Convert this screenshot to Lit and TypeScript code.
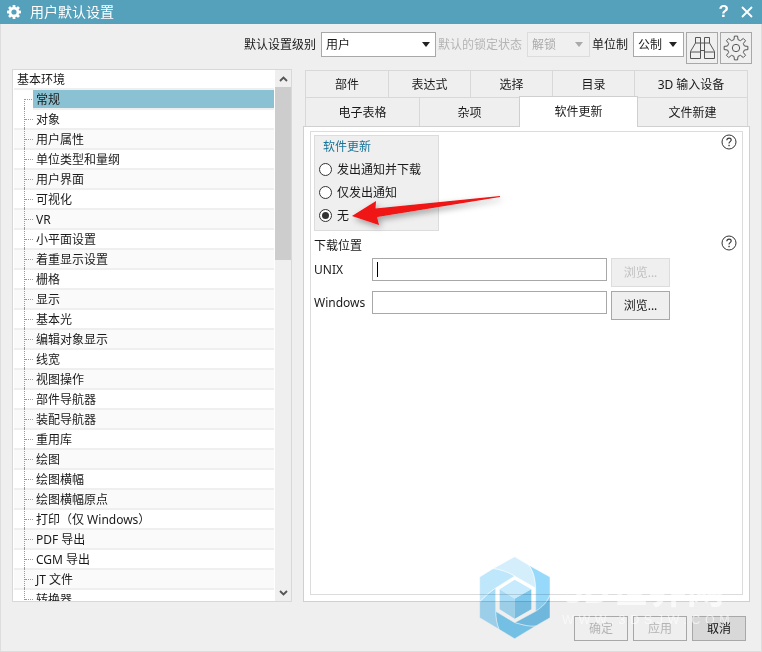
import { LitElement, html, css } from "lit";
import { customElement } from "lit/decorators.js";

const ITEMS = ["常规","对象","用户属性","单位类型和量纲","用户界面","可视化","VR","小平面设置","着重显示设置","栅格","显示","基本光","编辑对象显示","线宽","视图操作","部件导航器","装配导航器","重用库","绘图","绘图横幅","绘图横幅原点","打印（仅 Windows）","PDF 导出","CGM 导出","JT 文件","转换器"];

const help = (cls: string) => html`<svg class="help ${cls}" width="16" height="16" viewBox="0 0 16 16"><circle cx="8" cy="8" r="7" fill="none" stroke="#333" stroke-width="1"/><path d="M5.800 6.200c.1-1.400 1-2.100 2.200-2.100s2.200.8 2.200 1.900c0 1.700-2.200 1.700-2.200 3.500" fill="none" stroke="#333" stroke-width="1.100"/><rect x="7.400" y="10.800" width="1.300" height="1.400" fill="#333"/></svg>`;

const caret = (c: string) => html`<svg width="8" height="5" viewBox="0 0 8 5"><path d="M0 0h8L4 5z" fill=${c}/></svg>`;

function gearPath(cx: number, cy: number, ro: number, ri: number, teeth: number) {
  const pts: string[] = [];
  const step = (Math.PI * 2) / teeth;
  const pt = (r: number, a: number) => `${(cx + r * Math.cos(a)).toFixed(2)} ${(cy + r * Math.sin(a)).toFixed(2)}`;
  for (let i = 0; i < teeth; i++) {
    const a = i * step - Math.PI / 2;
    pts.push(pt(ri, a - step * 0.3), pt(ro, a - step * 0.17), pt(ro, a + step * 0.17), pt(ri, a + step * 0.3));
  }
  return "M" + pts.join("L") + "Z";
}

@customElement("app-root")
export class AppRoot extends LitElement {
  static styles = css`
    :host { display: block; width: 762px; height: 652px; overflow: hidden; position: relative; background: #efefef;
      font: 12px/16px "Noto Sans", "Noto Sans CJK SC", sans-serif; color: #1a1a1a; box-sizing: border-box; }
    * { box-sizing: border-box; }
    .title { height: 24px; background: #55a0bb; color: #fff; display: flex; align-items: center; padding: 0 9px 0 7px; }
    .title .name { margin-left: 9px; font-size: 14px; flex: 1; }
    .title .q { font: bold 17px "Liberation Sans", sans-serif; margin-right: 12px; }
    .main { height: 628px; border: 1px solid #ddd; border-top: 0; display: flex; flex-direction: column; padding: 8px 11px 0 11px; }
    .toolbar { height: 25px; display: flex; align-items: center; justify-content: flex-end; margin-right: -2px; }
    .lbl { white-space: nowrap; }
    .lbl.dis { color: #b4b4b4; }
    .sel { height: 25px; background: #fff; border: 1px solid #a8a8a8; display: flex; align-items: center; justify-content: space-between; padding: 0 6px 0 4px; }
    .sel.dis { border-color: #dcdcdc; background: #f0f0f0; color: #aaa; }
    .s1 { width: 115px; margin: 0 2px 0 5px; padding-right: 5px; }
    .s2 { width: 63px; margin: 0 2px 0 5px; }
    .s3 { width: 51px; margin: 0 2px 0 5px; }
    .toolbtn { width: 32px; height: 32px; border: 1px solid #a8a8a8; display: flex; align-items: center; justify-content: center; margin-top: 7px; }
    .toolbtn + .toolbtn { margin-left: 2px; }
    .content { display: flex; margin-top: 12px; height: 533px; }
    .tree { width: 280px; height: 533px; border: 1px solid #d8d8d8; background: #fff; display: flex; overflow: hidden; flex: none; }
    .list { width: 261px; flex: none; overflow: hidden; padding-left: 1px; }
    .row { height: 20px; display: flex; align-items: center; border-bottom: 2px solid #efefef; position: relative; padding: 1px 0 0 22px; line-height: 18px; white-space: nowrap; }
    .row:nth-child(even) { background: #fafafa; }
    .row.root { padding-left: 3px; background: #fff; }
    .row.item::before { content: ""; position: absolute; left: 10px; top: -2px; bottom: -2px; border-left: 1px dotted #999; }
    .row.item::after { content: ""; position: absolute; left: 11px; top: 9px; width: 8px; border-top: 1px dotted #999; }
    .row.sel-row { background: #8ac2d3; margin-left: 19px; padding-left: 3px; }
    .row.sel-row::before { left: -9px; top: 9px; }
    .row.sel-row::after { left: -8px; width: 7px; }
    .sb { width: 16px; background: #efefef; display: flex; flex-direction: column; align-items: center; flex: none; margin-left: 1px; }
    .sb .arrow { height: 17px; display: flex; align-items: center; justify-content: center; }
    .sb .thumb { height: 173px; width: 16px; background: #cdcdcd; margin-bottom: auto; }
    .right { margin-left: 11px; width: 447px; flex: none; height: 533px; display: flex; flex-direction: column; position: relative; }
    .tabs { display: grid; padding: 0 3px 0 2px; height: 28px; }
    .t1 { margin-top: 1px; grid-template-columns: 83px 82px 82px 82px 113px; }
    .t2 { grid-template-columns: 114px 100px 118px 110px; }
    .tab { border: 1px solid #d8d8d8; display: flex; align-items: center; justify-content: center; margin-right: -1px; background: #efefef; margin-top: -1px; padding-top: 2px; }
    .t1 .tab { margin-top: 0; }
    .tab.active { background: #fff; height: 31px; margin-top: -2px; z-index: 2; border-bottom: 0; border-color: #cfcfcf; align-self: start; padding-top: 0; }
    .panel { flex: 1; background: #fff; border: 1px solid #d0d0d0; padding: 4px 6px 6px; }
    .inner { height: 100%; border: 1px solid #dcdcdc; padding: 3px; position: relative; }
    .group { width: 125px; height: 96px; background: #efefef; border: 1px solid #dcdcdc; padding: 2px 0 0 8px; }
    .gt { color: #17749a; height: 20px; line-height: 17px; }
    .radio { display: flex; align-items: center; height: 23px; margin-left: -4px; gap: 5px; }
    .radio i { width: 13px; height: 13px; border: 1px solid #333; border-radius: 50%; background: #fff; display: flex; align-items: center; justify-content: center; flex: none; }
    .radio i.on::after { content: ""; width: 7px; height: 7px; border-radius: 50%; background: #333; }
    .help { position: absolute; }
    .help.h1 { top: 2px; right: 5px; }
    .help.h2 { top: 4px; right: 2px; }
    .hwrap { position: relative; height: 0; }
    .dl { margin-top: 6px; height: 18px; line-height: 18px; }
    .frow { display: flex; align-items: flex-start; margin-top: 4px; }
    .frow.first { margin-top: 3px; }
    .frow .k { width: 58px; padding-top: 4px; }
    .input { width: 235px; height: 23px; border: 1px solid #a8a8a8; background: #fff; }
    .caretbar { width: 1px; height: 15px; background: #000; margin: 3px 0 0 4px; }
    .browse { width: 59px; height: 29px; margin-left: 4px; border: 1px solid #a8a8a8; display: flex; align-items: center; justify-content: center; background: #efefef; }
    .browse.dis { border-color: #dcdcdc; color: #c0c0c0; }
    .footer { position: absolute; right: 16px; bottom: 11px; display: flex; gap: 5px; z-index: 1; }
    .btn { width: 54px; height: 25px; border: 1px solid #a8a8a8; display: flex; align-items: center; justify-content: center; color: #b4b4b4; }
    .btn.def { background: #d8d8d8; color: #111; }
    .over { position: absolute; left: 0; top: 0; pointer-events: none; z-index: 5; }
    .logo { position: absolute; left: 474px; top: 552px; pointer-events: none; z-index: 5; mix-blend-mode: multiply; }
    .wm1 { position: absolute; left: 562px; top: 570px; z-index: 6; color: rgba(255,255,255,.65); font: bold 38px/40px "Liberation Sans", "Noto Sans CJK SC", sans-serif; white-space: nowrap; }
    .wm2 { position: absolute; left: 562px; top: 613px; z-index: 6; color: rgba(255,255,255,.6); font: 12.5px/14px "Liberation Sans", sans-serif; letter-spacing: 4.6px; white-space: nowrap; }
  `;

  render() {
    return html`
      <div class="title">
        <svg width="14" height="14" viewBox="0 0 14 14"><g fill="#fff"><circle cx="7" cy="7" r="5.200"/><rect x="5.600" y="0" width="2.800" height="14" rx=".6"/><rect x="5.600" y="0" width="2.800" height="14" rx=".6" transform="rotate(45 7 7)"/><rect x="5.600" y="0" width="2.800" height="14" rx=".6" transform="rotate(90 7 7)"/><rect x="5.600" y="0" width="2.800" height="14" rx=".6" transform="rotate(135 7 7)"/></g><circle cx="7" cy="7" r="2.600" fill="#55a0bb"/></svg>
        <span class="name">用户默认设置</span>
        <span class="q">?</span>
        <svg width="12" height="12" viewBox="0 0 12 12"><path d="M1 1l10 10M11 1L1 11" stroke="#fff" stroke-width="1.800"/></svg>
      </div>
      <div class="main">
        <div class="toolbar">
          <span class="lbl">默认设置级别</span>
          <div class="sel s1"><span>用户</span>${caret("#222")}</div>
          <span class="lbl dis">默认的锁定状态</span>
          <div class="sel dis s2"><span>解锁</span>${caret("#aaa")}</div>
          <span class="lbl">单位制</span>
          <div class="sel s3"><span>公制</span>${caret("#222")}</div>
          <div class="toolbtn">
            <svg width="30" height="30" viewBox="0 0 30 30" fill="none" stroke="#555" stroke-width="1"><path d="M8.500 4.500H13.500V25.500H3.500V18.500L8.500 10ZM8.500 10H13.500M3.500 19H13.500M17.500 4.500H22.500V10L27.500 18.500V25.500H17.500ZM17.500 10H22.500M17.500 19H27.500M13.500 10H17.500M13.500 17.500H17.500"/></svg>
          </div>
          <div class="toolbtn">
            <svg width="30" height="30" viewBox="0 0 30 30" fill="none" stroke="#555" stroke-width="1" stroke-linejoin="round"><path d=${gearPath(15, 15, 12, 8.6, 8)}/><circle cx="15" cy="15" r="3.700"/></svg>
          </div>
        </div>
        <div class="content">
          <div class="tree">
            <div class="list">
              <div class="row root">基本环境</div>
              ${ITEMS.map((t, i) => html`<div class="row item ${i === 0 ? "sel-row" : ""}">${t}</div>`)}
            </div>
            <div class="sb">
              <div class="arrow"><svg width="9" height="6" viewBox="0 0 9 6"><path d="M1 5l3.500-3.500L8 5" fill="none" stroke="#555" stroke-width="1.800"/></svg></div>
              <div class="thumb"></div>
              <div class="arrow"><svg width="9" height="6" viewBox="0 0 9 6"><path d="M1 1l3.500 3.500L8 1" fill="none" stroke="#555" stroke-width="1.800"/></svg></div>
            </div>
          </div>
          <div class="right">
            <div class="tabs t1">
              <div class="tab">部件</div><div class="tab">表达式</div><div class="tab">选择</div><div class="tab">目录</div><div class="tab">3D 输入设备</div>
            </div>
            <div class="tabs t2">
              <div class="tab">电子表格</div><div class="tab">杂项</div><div class="tab active">软件更新</div><div class="tab">文件新建</div>
            </div>
            <div class="panel">
              <div class="inner">
                ${help("h1")}
                <div class="group">
                  <div class="gt">软件更新</div>
                  <div class="radio"><i></i>发出通知并下载</div>
                  <div class="radio"><i></i>仅发出通知</div>
                  <div class="radio"><i class="on"></i>无</div>
                </div>
                <div class="hwrap">${help("h2")}</div>
                <div class="dl">下载位置</div>
                <div class="frow first"><div class="k">UNIX</div><div class="input"><div class="caretbar"></div></div><div class="browse dis">浏览...</div></div>
                <div class="frow"><div class="k">Windows</div><div class="input"></div><div class="browse">浏览...</div></div>
              </div>
            </div>
          </div>
        </div>
      </div>
      <div class="footer">
        <div class="btn">确定</div><div class="btn">应用</div><div class="btn def">取消</div>
      </div>
      <svg class="logo" width="84" height="92" viewBox="0 0 252 276">
        <g stroke="#fff" stroke-width="1.500">
          <path d="M57 50L122 14 165 40C180 60 184 85 185 108L122 72C100 60 80 52 57 50Z" fill="#d4eefc"/>
          <path d="M165 40L228 75V130C220 150 205 165 185 178V108C184 85 180 60 165 40Z" fill="#97d9fa"/>
          <path d="M228 130V197L185 222C165 225 145 218 122 212L185 178C205 165 220 150 228 130Z" fill="#77c4ec"/>
          <path d="M185 222L122 260 75 232C68 215 65 197 65 178L122 212C145 218 165 225 185 222Z" fill="#7cccf4"/>
          <path d="M75 232L17 197V150C35 130 50 118 65 108V178C65 197 68 215 75 232Z" fill="#a5dcf8"/>
          <path d="M17 150V75L57 50C80 52 100 60 122 72L65 108C50 118 35 130 17 150Z" fill="#bfe7fb"/>
        </g>
        <path d="M122 83L172 112 122 140 77 112Z" fill="#c7eafc"/>
        <path d="M77 112L122 140V200L77 172Z" fill="#a8dcf7"/>
        <path d="M172 112V172L122 200V140Z" fill="#7fc8ee"/>
      </svg>
      <svg class="over" width="762" height="652" viewBox="0 0 762 652">
        <defs><filter id="sh" x="-20%" y="-50%" width="140%" height="200%"><feDropShadow dx="2" dy="3" stdDeviation="3" flood-color="#000" flood-opacity=".35"/></filter></defs>
        <path d="M352 216L376 201 375.500 208.500 500 196 500 197 377 217 379 225Z" fill="#f01313" filter="url(#sh)"/>
      </svg>
      <div class="wm1">3D世界网</div>
      <div class="wm2">WWW.3DSJW.COM</div>
    `;
  }
}
